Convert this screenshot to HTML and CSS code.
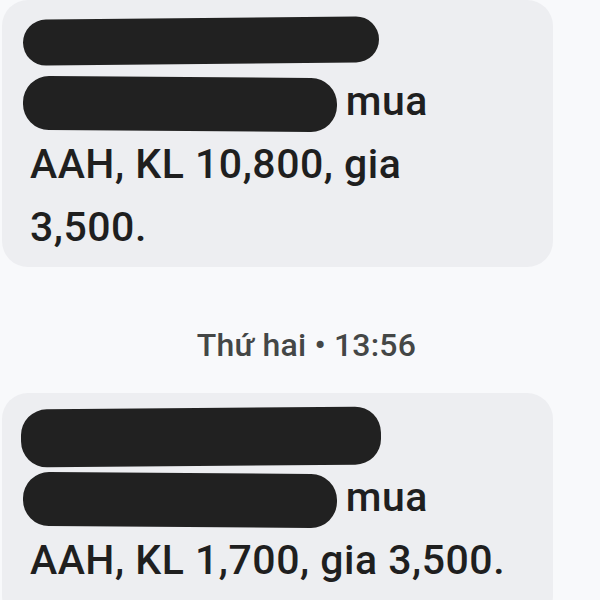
FILE: index.html
```html
<!DOCTYPE html>
<html lang="vi">
<head>
<meta charset="utf-8">
<link rel="stylesheet" href="styles.css">
</head>
<body>
<div class="thread">
  <div class="bubble first">
    <div class="line"><span class="ink ink-a"></span></div>
    <div class="line"><span class="ink ink-b"></span> mua</div>
    <div class="line">AAH, KL 10,800, gia</div>
    <div class="line">3,500.</div>
  </div>
  <div class="stamp">Thứ hai • 13:56</div>
  <div class="bubble second">
    <div class="line"><span class="ink ink-c"></span></div>
    <div class="line"><span class="ink ink-b"></span> mua</div>
    <div class="line">AAH, KL 1,700, gia 3,500.</div>
  </div>
</div>
</body>
</html>
```
FILE: styles.css
```css
html, body {
  margin: 0;
  padding: 0;
  background: #f8f9fb;
}
body {
  width: 600px;
  height: 600px;
  overflow: hidden;
  font-family: Roboto, "Liberation Sans", sans-serif;
}
.thread {
  display: flex;
  flex-direction: column;
  padding-left: 2px;
}
.bubble {
  width: 523px;
  background: #edeef1;
  border-radius: 26px;
  padding: 7px 0 8px 28px;
  color: #1f1f1f;
  font-size: 41px;
  font-weight: 500;
  letter-spacing: 0.5px;
  line-height: 63px;
}
.bubble.second {
  padding-top: 10px;
  padding-bottom: 30px;
}
.line {
  height: 63px;
  white-space: nowrap;
}
.ink {
  display: inline-block;
  vertical-align: middle;
  background: #212121;
  border-radius: 26px;
  height: 50px;
  margin-left: -7px;
  margin-right: -2px;
}
.ink-a {
  width: 356px;
  height: 46px;
  transform: rotate(-0.6deg);
}
.ink-b {
  width: 314px;
  height: 54px;
  transform: rotate(0.4deg);
}
.ink-c {
  width: 360px;
  height: 58px;
  margin-left: -9px;
  transform: rotate(-0.5deg);
}
.stamp {
  width: 553px;
  text-align: center;
  margin: 58px 0 28px;
  font-size: 32px;
  font-weight: 500;
  letter-spacing: 0.2px;
  line-height: 40px;
  color: #444746;
  padding-left: 56px;
  box-sizing: border-box;
}
```
